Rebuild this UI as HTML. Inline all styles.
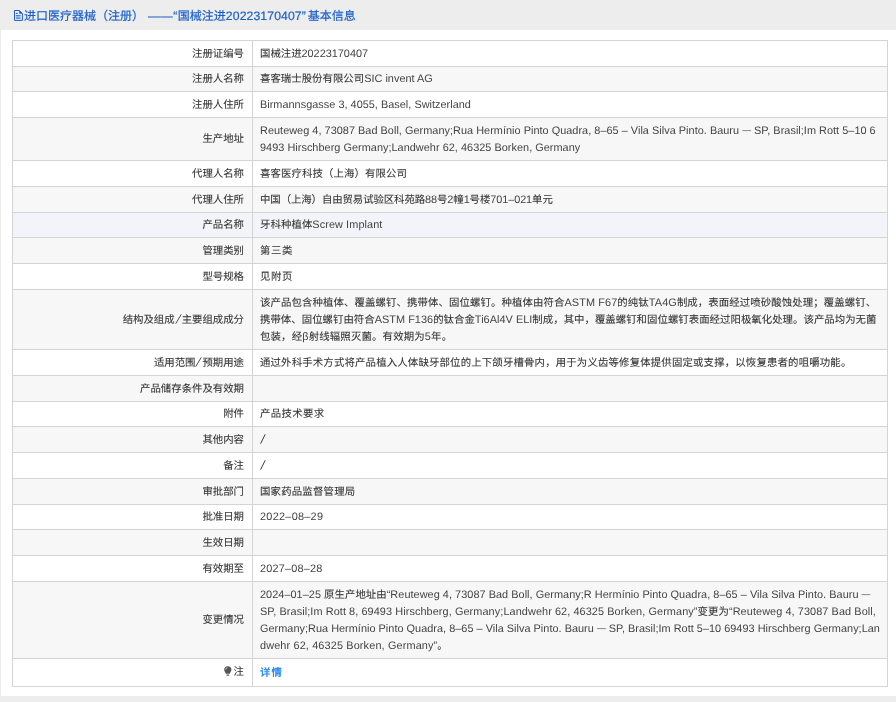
<!DOCTYPE html>
<html lang="zh-CN"><head><meta charset="utf-8">
<style>
html,body{margin:0;padding:0;}
body{width:896px;height:702px;background:#ededed;font-family:"Liberation Sans",sans-serif;overflow:hidden;position:relative;color:#333333;text-rendering:geometricPrecision;}
.title{position:absolute;left:0;top:0;width:896px;height:30px;}
.title .t{position:absolute;left:24px;top:8px;font-size:12px;line-height:16px;color:#1c5fc8;white-space:nowrap;letter-spacing:0px;}
.wrap{position:absolute;left:0;top:0;width:896px;height:702px;will-change:transform;}
.panel{position:absolute;left:1px;top:30px;width:895px;height:666px;background:#fff;}
.bgr{position:absolute;left:13px;width:874px;}
.hl{position:absolute;left:12px;width:876px;height:1px;background:#d4d4d4;}
.vl{position:absolute;top:40px;width:1px;height:647px;background:#d4d4d4;}
.k{position:absolute;right:652px;font-size:10.4px;line-height:17px;white-space:nowrap;text-align:right;}
.v{position:absolute;left:260px;font-size:10.4px;line-height:17px;white-space:nowrap;}
b.l{position:relative;top:0px;font-weight:normal;font-size:10.9px;color:#444;-webkit-text-stroke:0;}
.k,.v{-webkit-text-stroke:0.08px #333333;}
.link,.link b.l{-webkit-text-stroke:0;color:#2d8cf0}
.title b.l{font-size:12.2px;letter-spacing:0.5px;color:#1c5fc8;top:0;-webkit-text-stroke:0.2px #1c5fc8;}
.title .t{-webkit-text-stroke:0.2px #1c5fc8;}
i.em{font-style:normal;font-size:8.8px;position:relative;top:-0.8px;}
svg.sl{vertical-align:-1px;}
.link{color:#2d8cf0;font-weight:bold;}
</style></head><body>
<div class="wrap">
<div class="title"><svg style="position:absolute;left:13px;top:9px" width="11" height="13" viewBox="0 0 11 13"><path d='M1.5 1.5H6.3L9.4 4.6V11.4H1.5Z' fill='none' stroke='#1c5fc8' stroke-width='1'/><path d='M6.2 1.2L9.8 4.8H6.2Z' fill='#1c5fc8'/><rect x='2.9' y='3.9' width='1.9' height='1' fill='#1c5fc8'/><rect x='2.9' y='6.3' width='4.6' height='3.2' fill='#9fb8e6'/><rect x='2.9' y='6.1' width='4.6' height='0.9' fill='#3f77d0'/><rect x='2.9' y='8.8' width='4.6' height='0.9' fill='#3f77d0'/></svg><div class="t">进口医疗器械（注册）<b class="l" style="letter-spacing:0.5px"> ——“</b>国械注进<b class="l" style="letter-spacing:0.12px">20223170407</b><b class="l" style="letter-spacing:2px">”</b>基本信息</div></div>
<div class="panel"></div>
<div class="bgr" style="top:67px;height:24px;background:#f7f7f7"></div>
<div class="bgr" style="top:118px;height:42px;background:#f7f7f7"></div>
<div class="bgr" style="top:187px;height:25px;background:#f7f7f7"></div>
<div class="bgr" style="top:213px;height:24px;background:#f3f4fa"></div>
<div class="bgr" style="top:238px;height:25px;background:#f7f7f7"></div>
<div class="bgr" style="top:290px;height:59px;background:#f7f7f7"></div>
<div class="bgr" style="top:376px;height:25px;background:#f7f7f7"></div>
<div class="bgr" style="top:427px;height:25px;background:#f7f7f7"></div>
<div class="bgr" style="top:479px;height:25px;background:#f7f7f7"></div>
<div class="bgr" style="top:530px;height:25px;background:#f7f7f7"></div>
<div class="bgr" style="top:582px;height:76px;background:#f7f7f7"></div>
<div class="hl" style="top:40px"></div>
<div class="hl" style="top:66px"></div>
<div class="hl" style="top:91px"></div>
<div class="hl" style="top:117px"></div>
<div class="hl" style="top:160px"></div>
<div class="hl" style="top:186px"></div>
<div class="hl" style="top:212px"></div>
<div class="hl" style="top:237px"></div>
<div class="hl" style="top:263px"></div>
<div class="hl" style="top:289px"></div>
<div class="hl" style="top:349px"></div>
<div class="hl" style="top:375px"></div>
<div class="hl" style="top:401px"></div>
<div class="hl" style="top:426px"></div>
<div class="hl" style="top:452px"></div>
<div class="hl" style="top:478px"></div>
<div class="hl" style="top:504px"></div>
<div class="hl" style="top:529px"></div>
<div class="hl" style="top:555px"></div>
<div class="hl" style="top:581px"></div>
<div class="hl" style="top:658px"></div>
<div class="hl" style="top:686px"></div>
<div class="vl" style="left:12px"></div>
<div class="vl" style="left:252px"></div>
<div class="vl" style="left:887px"></div>
<div class="k" style="top:45.50px;">注册证编号</div>
<div class="v" style="top:45.50px;letter-spacing:-0.011px">国械注进<b class="l">20223170407</b></div>
<div class="k" style="top:71.00px;">注册人名称</div>
<div class="v" style="top:71.00px;letter-spacing:0.023px">喜客瑞士股份有限公司<b class="l">SIC invent AG</b></div>
<div class="k" style="top:96.50px;">注册人住所</div>
<div class="v" style="top:96.50px;letter-spacing:0.021px"><b class="l">Birmannsgasse 3, 4055, Basel, Switzerland</b></div>
<div class="k" style="top:131.00px;">生产地址</div>
<div class="v" style="top:122.50px;letter-spacing:0.031px"><b class="l">Reuteweg 4, 73087 Bad Boll, Germany;Rua Hermínio Pinto Quadra, 8–65 – Vila Silva Pinto. Bauru <i class="em">—</i> SP, Brasil;Im Rott 5–10 6</b></div>
<div class="v" style="top:139.50px;letter-spacing:0.032px"><b class="l">9493 Hirschberg Germany;Landwehr 62, 46325 Borken, Germany</b></div>
<div class="k" style="top:165.50px;">代理人名称</div>
<div class="v" style="top:165.50px;letter-spacing:0.104px">喜客医疗科技（上海）有限公司</div>
<div class="k" style="top:191.50px;">代理人住所</div>
<div class="v" style="top:191.50px;letter-spacing:-0.078px">中国（上海）自由贸易试验区科苑路<b class="l">88</b>号<b class="l">2</b>幢<b class="l">1</b>号楼<b class="l">701–021</b>单元</div>
<div class="k" style="top:217.00px;">产品名称</div>
<div class="v" style="top:217.00px;letter-spacing:0.080px">牙科种植体<b class="l">Screw Implant</b></div>
<div class="k" style="top:242.50px;">管理类别</div>
<div class="v" style="top:242.50px;letter-spacing:0.600px">第三类</div>
<div class="k" style="top:268.50px;">型号规格</div>
<div class="v" style="top:268.50px;letter-spacing:0.600px">见附页</div>
<div class="k" style="top:311.50px;">结构及组成<svg class='sl' width='7' height='10' viewBox='0 0 7 10'><path d='M0.7 9.7L6.3 0.3' stroke='#444' stroke-width='0.95' fill='none'/></svg>主要组成成分</div>
<div class="v" style="top:294.50px;letter-spacing:0.106px">该产品包含种植体、覆盖螺钉、携带体、固位螺钉。种植体由符合<b class="l">ASTM F67</b>的纯钛<b class="l">TA4G</b>制成，表面经过喷砂酸蚀处理；覆盖螺钉、</div>
<div class="v" style="top:311.50px;letter-spacing:0.036px">携带体、固位螺钉由符合<b class="l">ASTM F136</b>的钛合金<b class="l">Ti6Al4V ELI</b>制成，其中，覆盖螺钉和固位螺钉表面经过阳极氧化处理。该产品均为无菌</div>
<div class="v" style="top:328.50px;letter-spacing:0.170px">包装，经<b class="l">β</b>射线辐照灭菌。有效期为<b class="l">5</b>年。</div>
<div class="k" style="top:354.50px;">适用范围<svg class='sl' width='7' height='10' viewBox='0 0 7 10'><path d='M0.7 9.7L6.3 0.3' stroke='#444' stroke-width='0.95' fill='none'/></svg>预期用途</div>
<div class="v" style="top:354.50px;letter-spacing:0.171px">通过外科手术方式将产品植入人体缺牙部位的上下颌牙槽骨内，用于为义齿等修复体提供固定或支撑，以恢复患者的咀嚼功能。</div>
<div class="k" style="top:380.50px;">产品储存条件及有效期</div>
<div class="k" style="top:406.00px;">附件</div>
<div class="v" style="top:406.00px;letter-spacing:0.380px">产品技术要求</div>
<div class="k" style="top:431.50px;">其他内容</div>
<div class="v" style="top:431.50px;letter-spacing:0.000px"><svg class='sl' width='6' height='10' viewBox='0 0 6 10'><path d='M0.6 9.7L5.2 0.3' stroke='#3a3a3a' stroke-width='1' fill='none'/></svg></div>
<div class="k" style="top:457.50px;">备注</div>
<div class="v" style="top:457.50px;letter-spacing:0.000px"><svg class='sl' width='6' height='10' viewBox='0 0 6 10'><path d='M0.6 9.7L5.2 0.3' stroke='#3a3a3a' stroke-width='1' fill='none'/></svg></div>
<div class="k" style="top:483.50px;">审批部门</div>
<div class="v" style="top:483.50px;letter-spacing:0.200px">国家药品监督管理局</div>
<div class="k" style="top:509.00px;">批准日期</div>
<div class="v" style="top:509.00px;letter-spacing:0.269px"><b class="l">2022–08–29</b></div>
<div class="k" style="top:534.50px;">生效日期</div>
<div class="k" style="top:560.50px;">有效期至</div>
<div class="v" style="top:560.50px;letter-spacing:0.190px"><b class="l">2027–08–28</b></div>
<div class="k" style="top:612.00px;">变更情况</div>
<div class="v" style="top:586.50px;letter-spacing:0.044px"><b class="l">2024–01–25 </b>原生产地址由<b class="l">“Reuteweg 4, 73087 Bad Boll, Germany;R Hermínio Pinto Quadra, 8–65 – Vila Silva Pinto. Bauru <i class="em">—</i></b></div>
<div class="v" style="top:603.50px;letter-spacing:0.081px"><b class="l">SP, Brasil;Im Rott 8, 69493 Hirschberg, Germany;Landwehr 62, 46325 Borken, Germany”</b>变更为<b class="l">“Reuteweg 4, 73087 Bad Boll,</b></div>
<div class="v" style="top:620.50px;letter-spacing:0.026px"><b class="l">Germany;Rua Hermínio Pinto Quadra, 8–65 – Vila Silva Pinto. Bauru <i class="em">—</i> SP, Brasil;Im Rott 5–10 69493 Hirschberg Germany;Lan</b></div>
<div class="v" style="top:637.50px;letter-spacing:0.132px"><b class="l">dwehr 62, 46325 Borken, Germany”</b>。</div>
<div class="k" style="top:663.50px;"><svg style="display:inline-block;vertical-align:-1px;margin-right:2px" width="8" height="10" viewBox="0 0 8 10"><path d='M3.8 0.2A3.6 3.6 0 0 1 7.4 3.8C7.4 5.3 6.3 6.2 5.7 7.8H1.9C1.3 6.2 0.2 5.3 0.2 3.8A3.6 3.6 0 0 1 3.8 0.2Z' fill='#555'/><rect x='2.5' y='8.5' width='2.6' height='1.3' fill='#666'/><path d='M1.7 3.6A2.2 2.2 0 0 1 3.4 1.6' stroke='#ddd' stroke-width='0.9' fill='none'/></svg>注</div>
<div class="v link" style="top:664.50px;letter-spacing:1.000px">详情</div>
</div>
</body></html>
